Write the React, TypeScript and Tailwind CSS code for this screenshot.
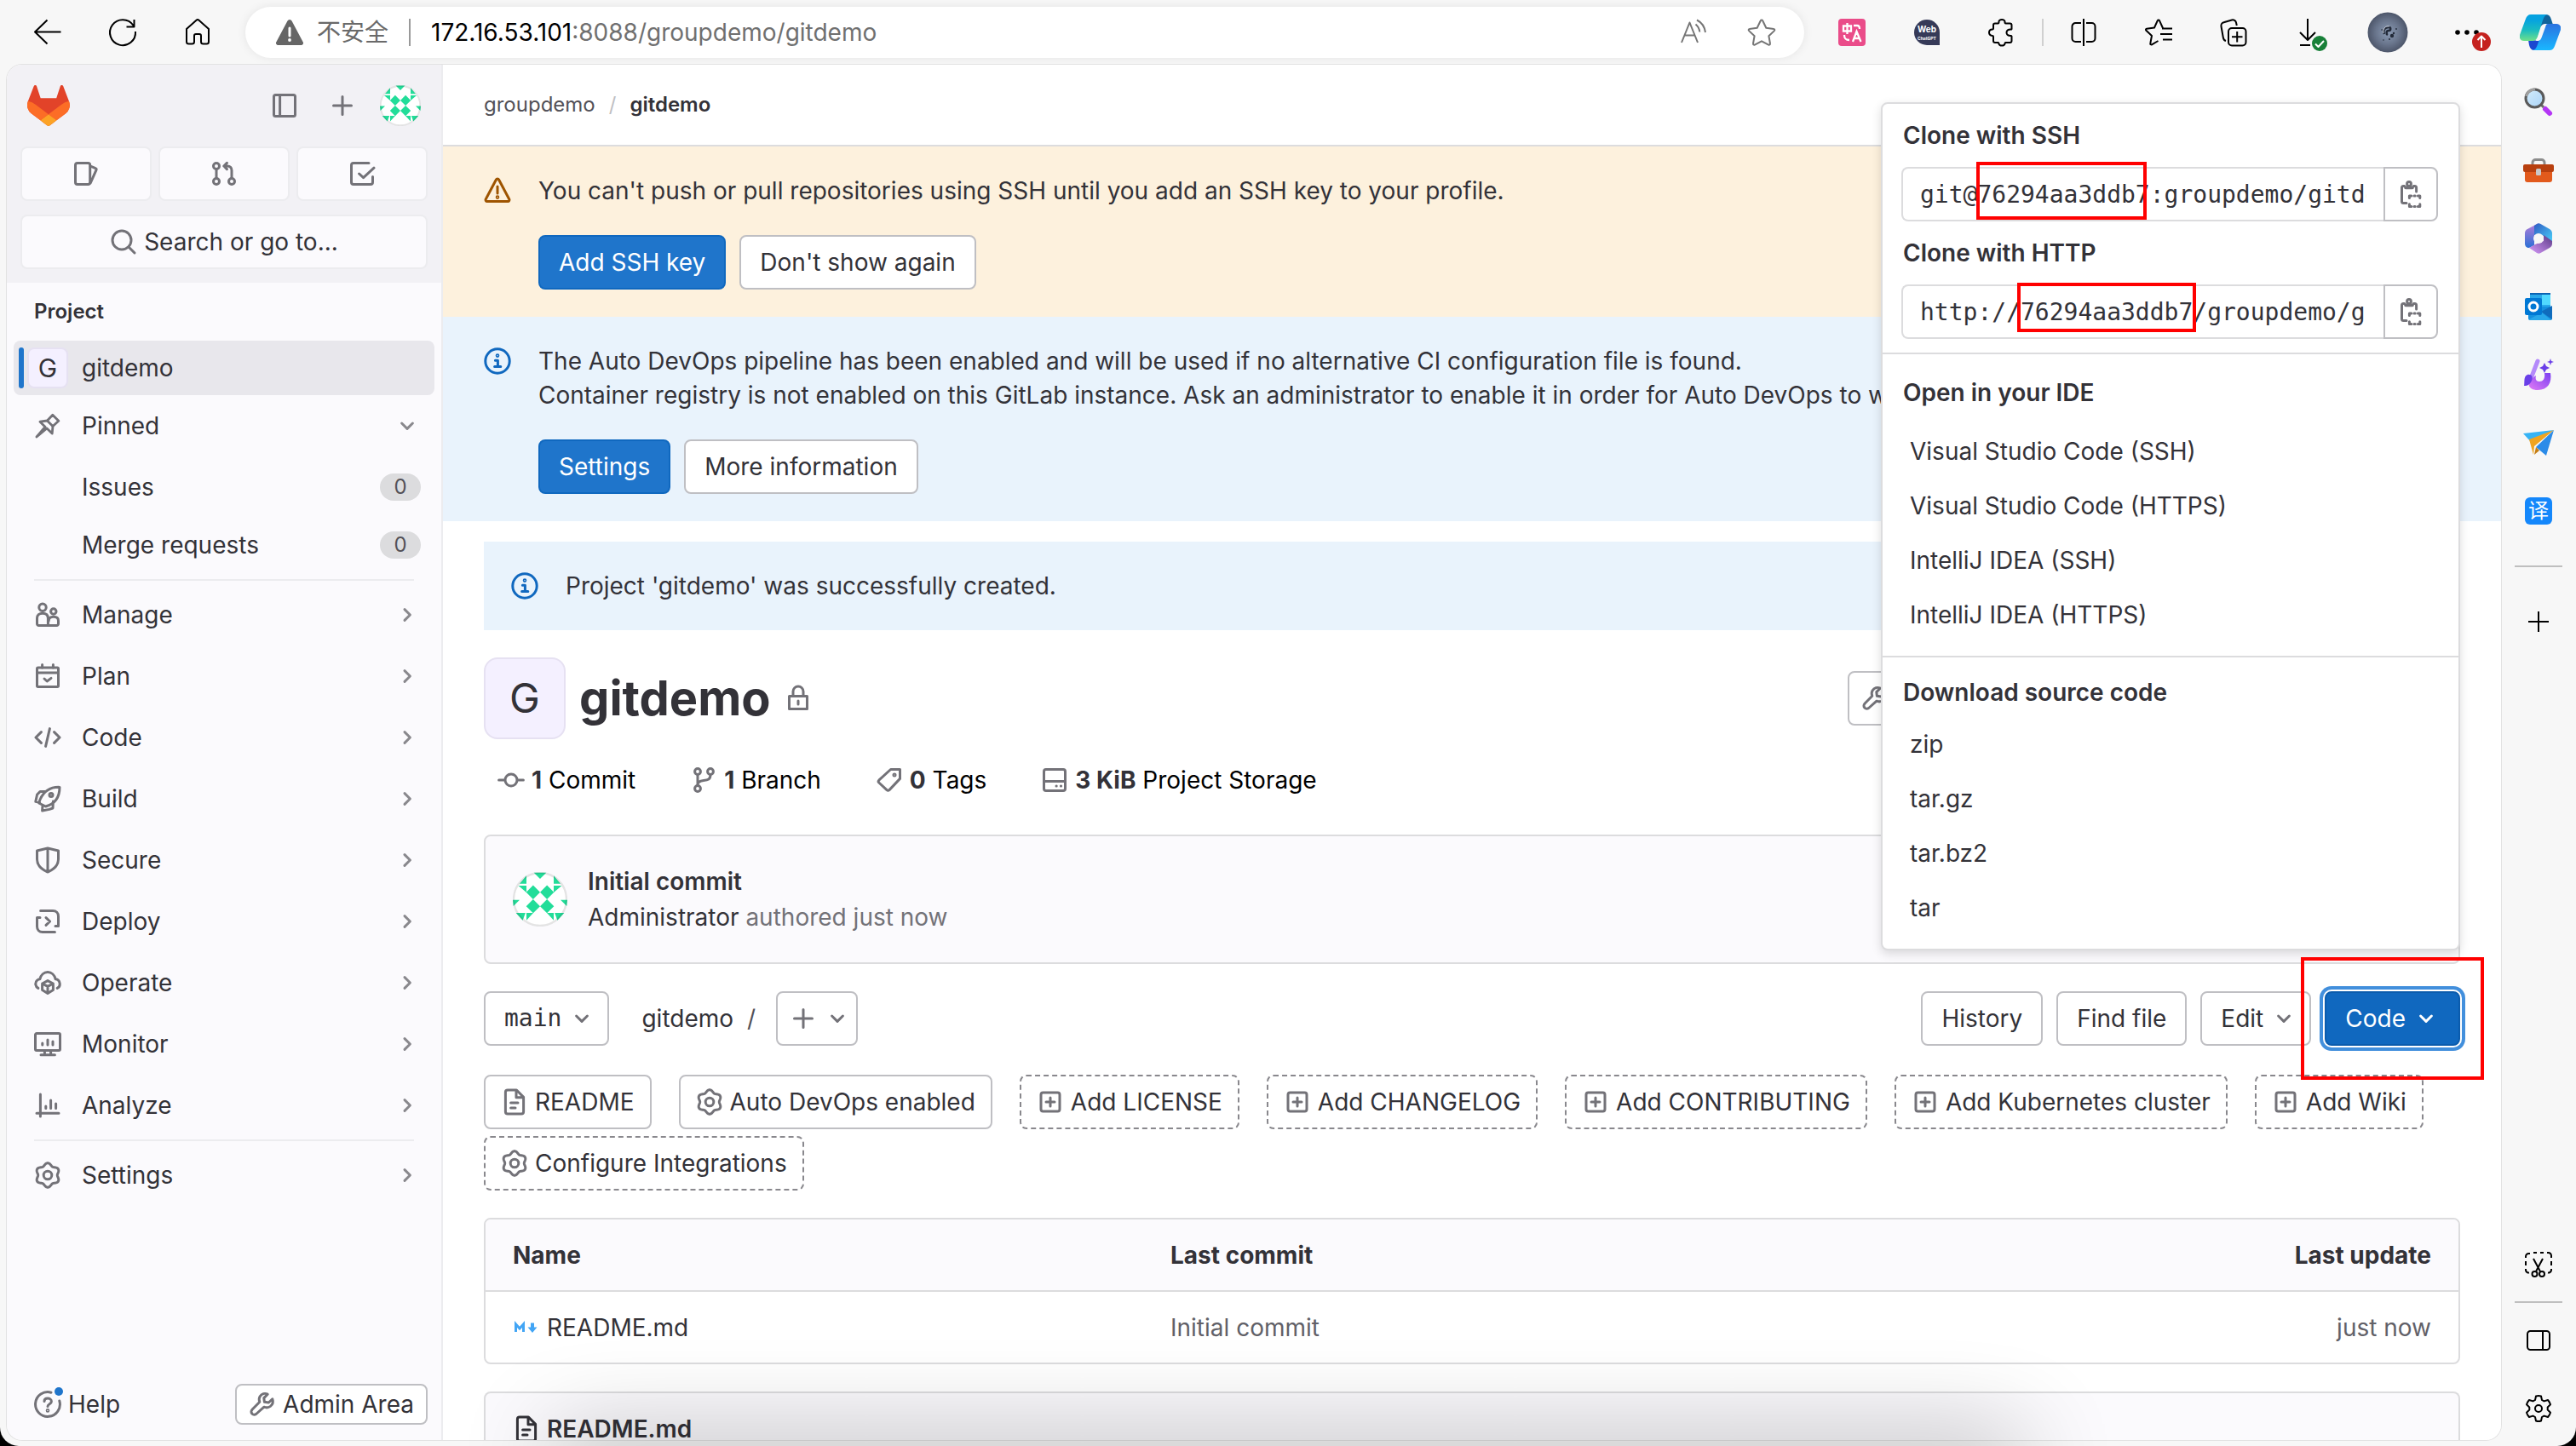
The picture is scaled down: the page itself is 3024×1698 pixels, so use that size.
import type { ReactNode } from "react";

/* ---------- icon helpers ---------- */

type IconProps = { children: ReactNode; className?: string };

function Icon({ children, className = "size-8 shrink-0 text-[#737278]" }: IconProps) {
  return (
    <svg viewBox="0 0 16 16" className={className} fill="none" stroke="currentColor" strokeWidth="1.5" strokeLinecap="round" strokeLinejoin="round" aria-hidden="true">
      {children}
    </svg>
  );
}

function EdgeIcon({ children, className = "size-8 shrink-0 overflow-visible text-black" }: IconProps) {
  return (
    <svg viewBox="0 0 32 32" className={className} fill="none" stroke="currentColor" strokeWidth="2" strokeLinecap="butt" strokeLinejoin="round" aria-hidden="true">
      {children}
    </svg>
  );
}

function lobedPath(lobes: number, base: number, amplitude: number, center: number) {
  const points: string[] = [];
  for (let i = 0; i < 120; i++) {
    const t = (i / 120) * Math.PI * 2;
    const r = base + amplitude * Math.cos(lobes * t);
    points.push(`${(center + r * Math.sin(t)).toFixed(2)} ${(center - r * Math.cos(t)).toFixed(2)}`);
  }
  return `M${points.join("L")}Z`;
}

const gearOutline = lobedPath(6, 6.4, 0.75, 8);

const GearShape = () => (
  <>
    <path d={gearOutline} />
    <circle cx="8" cy="8" r="2.4" />
  </>
);
const WrenchShape = () => (
  <path d="M13.9 4.9 11.7 7 9.2 6.6 8.9 4.3 11.1 2.1C9.4 1.3 7.5 1.9 6.6 3.4c-.6 1-.6 2.2-.2 3.2L2.1 11c-.8.8-.8 1.9-.1 2.6.7.7 1.9.7 2.6-.1L9 9.6c1.200.5 2.600.4 3.700-.4 1.300-1 1.800-2.700 1.200-4.300Z" />
);
const InfoShape = () => (
  <>
    <circle cx="8" cy="8" r="7.1" />
    <path d="M6.700 7.600H8.200V11.200M6.300 11.300H9.900" />
    <circle cx="8" cy="4.800" r=".4" />
  </>
);
const DocShape = () => (
  <>
    <path d="M9.200 1H4C3.200 1 2.700 1.500 2.700 2.200V13.800C2.700 14.500 3.200 15 4 15H12C12.800 15 13.300 14.500 13.300 13.800V5.200ZM9 1.200V5.400H13" />
    <path d="M5.800 8.500H10M5.800 11.500H8.500" />
  </>
);
const PlusSquareShape = () => (
  <>
    <rect x="2.500" y="2.500" width="11" height="11" rx="1.200" />
    <path d="M8 5.500v5M5.500 8h5" />
  </>
);

const ChevronDown = ({ className = "size-8 shrink-0 text-[#737278]" }: { className?: string }) => (
  <Icon className={className}>
    <path d="M4.800 6.500 8 9.700l3.200-3.200" />
  </Icon>
);
const ChevronRight = () => (
  <Icon className="size-8 shrink-0 text-[#89888d]">
    <path d="M6.500 4.800 9.700 8l-3.200 3.200" />
  </Icon>
);

function Identicon({ className }: { className: string }) {
  return (
    <svg viewBox="-22 -22 44 44" className={className} aria-hidden="true">
      <circle r="22" fill="#fff" />
      <g fill="#22dd99">
        <path d="M-5.600-11.300 0-5.600-5.600 0-11.200-5.600ZM5.600-11.300 11.200-5.600 5.600 0 0-5.600ZM-5.600 0 0 5.600-5.600 11.200-11.200 5.600ZM5.600 0 11.200 5.600 5.600 11.200 0 5.600Z" />
        <path d="M-5-21.500H5L0-16.500ZM-11-19V-12.500L-16.500-12.500ZM11-19V-12.500L16.500-12.500ZM-17.500-11H-11V-5.500ZM17.500-11H11V-5.500Z" />
        <path d="M-22 0.500H-16.500L-21.500 5.500ZM22 0.500H16.500L21.500 5.500ZM-19.500 11H-11.800L-14 17ZM19.500 11H11.800L14 17ZM-11 11H-5.500L-11 17ZM11 11H5.500L11 17Z" />
      </g>
      <circle r="21.300" fill="none" stroke="#1f1e24" strokeOpacity=".12" strokeWidth="1.600" />
    </svg>
  );
}

const Tanuki = () => (
  <svg viewBox="0 0 25 24" className="h-12 w-[50px]" aria-hidden="true">
    <path d="m24.507 9.5-.034-.09L21.082.562a.896.896 0 0 0-1.694.091l-2.29 7.01H7.825L5.535.653a.898.898 0 0 0-1.694-.09L.451 9.411.416 9.5a6.297 6.297 0 0 0 2.09 7.278l.012.01.03.022 5.16 3.867 2.56 1.935 1.554 1.176a1.051 1.051 0 0 0 1.268 0l1.555-1.176 2.56-1.935 5.197-3.89.014-.01A6.297 6.297 0 0 0 24.507 9.5Z" fill="#E24329" />
    <path d="m24.507 9.5-.034-.09a11.44 11.44 0 0 0-4.56 2.051l-7.447 5.632 4.742 3.584 5.197-3.89.014-.01A6.297 6.297 0 0 0 24.507 9.5Z" fill="#FC6D26" />
    <path d="m7.707 20.677 2.56 1.935 1.555 1.176a1.051 1.051 0 0 0 1.268 0l1.555-1.176 2.56-1.935-4.743-3.584-4.755 3.584Z" fill="#FCA326" />
    <path d="M5.01 11.461a11.43 11.43 0 0 0-4.56-2.05L.416 9.5a6.297 6.297 0 0 0 2.09 7.278l.012.01.03.022 5.16 3.867 4.745-3.584-7.444-5.632Z" fill="#FC6D26" />
  </svg>
);

/* ---------- browser chrome ---------- */

function ToolButton({ label, children }: { label: string; children: ReactNode }) {
  return (
    <button type="button" aria-label={label} className="flex h-full w-[88px] shrink-0 items-center justify-center">
      {children}
    </button>
  );
}

function BrowserBar() {
  return (
    <header className="flex h-[76px] shrink-0 items-center pl-3">
      <ToolButton label="Back">
        <EdgeIcon><path d="M31.500 15.500H1.500M15.500 1.500 1 15.500l14.500 14" /></EdgeIcon>
      </ToolButton>
      <ToolButton label="Reload">
        <EdgeIcon><path d="M31 15A15 15 0 1 1 28.500 7.800L29 9.200M29.500 1v8.500H20.500" /></EdgeIcon>
      </ToolButton>
      <ToolButton label="Home">
        <EdgeIcon><path d="M3 12 14.500 1.800a2 2 0 0 1 3 0L29 12V27a2.500 2.500 0 0 1-2.500 2.500H22.500a2.500 2.500 0 0 1-2.500-2.500V20a2 2 0 0 0-2-2h-4a2 2 0 0 0-2 2v7a2.500 2.500 0 0 1-2.500 2.500H5.500A2.500 2.500 0 0 1 3 27z" /></EdgeIcon>
      </ToolButton>

      <div className="mx-3 flex h-[60px] flex-1 items-center rounded-full bg-white pr-[34px] pl-9 text-[28px] shadow-[0_0_12px_rgba(0,0,0,0.08)]">
        <svg viewBox="0 0 32 32" className="size-8 shrink-0" aria-hidden="true">
          <path d="M13.500 2.500a2.800 2.800 0 0 1 5 0L31.500 27a2.500 2.500 0 0 1-2.200 4H2.700A2.500 2.500 0 0 1 .5 27Z" fill="#666" />
          <path d="M16 11v9" stroke="#fff" strokeWidth="3" strokeLinecap="round" />
          <circle cx="16" cy="25" r="1.900" fill="#fff" />
        </svg>
        <span className="ml-4 text-[#6a6a6a]">不安全</span>
        <span className="mx-6 h-8 w-0.5 bg-[#999]" />
        <p className="flex-1 text-[#707070]">
          <span className="text-black">172.16.53.101</span>:8088/groupdemo/gitdemo
        </p>
        <button type="button" aria-label="Read aloud">
          <EdgeIcon className="size-8 text-[#757575]"><path d="M2 28 11.500 4.500 21 28M5.500 19.500h12M18.500 6.500c2.500 2 4.300 4.800 4.800 9M20 1.500c5 2.500 9 7.500 10 14.500" /></EdgeIcon>
        </button>
        <button type="button" aria-label="Add to favorites" className="ml-12">
          <EdgeIcon className="size-8 overflow-visible text-[#757575]"><path d="M14.800 2.200a1.300 1.300 0 0 1 2.400 0l4.100 8.500 8.900 1.300a1.200 1.200 0 0 1 .7 2.100l-6.500 6.200 1.600 8.900a1.300 1.300 0 0 1-1.900 1.400L16 26.300l-8.100 4.300a1.300 1.300 0 0 1-1.900-1.400l1.600-8.900-6.500-6.200a1.200 1.200 0 0 1 .7-2.100l8.900-1.300z" /></EdgeIcon>
        </button>
      </div>

      <ToolButton label="Translate extension">
        <svg viewBox="0 0 32 32" className="size-8" fill="none" stroke="#fff" strokeWidth="2" aria-hidden="true">
          <rect width="32" height="32" rx="4" fill="#ea4c89" stroke="none" />
          <path d="M6 8.500h9v6H6zM10.500 5v13M18 8h4c2 0 3 1 3 4M7 19c0 4 1 6 6 6M17 27l4.500-12L26.500 27M19 23h6" strokeWidth="2.300" />
        </svg>
      </ToolButton>
      <ToolButton label="Web ChatGPT">
        <span className="relative flex size-[30px] flex-col items-center justify-center rounded-full rounded-br-md bg-[#363a58] text-[10px] leading-[13px] font-bold text-white">
          <span>Web</span>
          <span className="text-[5px] leading-[8px]">ChatGPT</span>
        </span>
      </ToolButton>
      <ToolButton label="Extensions">
        <EdgeIcon><path d="M8 5.500h3.500a1 1 0 0 0 .9-1.400C12.300 2 14 1 16 1s3.700 1 3.600 3.100a1 1 0 0 0 .9 1.400H25.500a2 2 0 0 1 2 2V12a1 1 0 0 1-1 .6c-2.800 0-5 1.400-5 3.700s2.200 3.700 5 3.700a1 1 0 0 1 1 .6V26a2 2 0 0 1-2 2H20.500a1 1 0 0 0-.9 1.200C19.300 30.500 18 31.500 16 31.500s-3.300-1-3.600-2.300A1 1 0 0 0 11.500 28H8a2 2 0 0 1-2-2v-5a1 1 0 0 0-1-1C2.500 19.700 1 18.500 1 16.300s1.500-3.600 4-3.700a1 1 0 0 0 1-1V7.500a2 2 0 0 1 2-2z" /></EdgeIcon>
      </ToolButton>
      <span className="mx-[3px] h-8 w-0.5 shrink-0 bg-[#d0d0d0]" />
      <ToolButton label="Split screen">
        <EdgeIcon><path d="M13 5H6.500a4 4 0 0 0-4 4v14a4 4 0 0 0 4 4H13M19 5h6.500a4 4 0 0 1 4 4v14a4 4 0 0 1-4 4H19M16 0v32" /></EdgeIcon>
      </ToolButton>
      <ToolButton label="Favorites">
        <EdgeIcon><path d="M21 11 17 2.200a1.200 1.200 0 0 0-2.200 0L11 10.500 2 11.700a1.200 1.200 0 0 0-.6 2.100L8 20l-1.700 9a1.200 1.200 0 0 0 1.800 1.300L15.500 26M20 11.500H32M18 18H32M21 24.500H32" /></EdgeIcon>
      </ToolButton>
      <ToolButton label="Collections">
        <EdgeIcon><rect x="10" y="11" width="20.500" height="20.500" rx="4" /><path d="M20.200 15v12.500M14 21.300h12.500M7 26C5 25.500 4.200 24.500 3.800 22L1.500 9a4 4 0 0 1 3-4.700L14 1.500a4 4 0 0 1 5 3l.8 3.500" /></EdgeIcon>
      </ToolButton>
      <ToolButton label="Downloads">
        <EdgeIcon>
          <path d="M15 0v25M6 16l9 9 9-9M6 31h12" />
          <circle cx="29" cy="29" r="9" fill="#188038" stroke="none" />
          <path d="m24 29.500 3.500 3.500 6.500-7" stroke="#fff" />
        </EdgeIcon>
      </ToolButton>
      <button type="button" aria-label="Profile" className="flex w-[98px] shrink-0 justify-center">
        <svg viewBox="0 0 48 48" className="size-12" aria-hidden="true">
          <defs>
            <radialGradient id="profile">
              <stop offset="0" stopColor="#8b9bb4" />
              <stop offset=".6" stopColor="#69758c" />
              <stop offset="1" stopColor="#4d566a" />
            </radialGradient>
          </defs>
          <circle cx="24" cy="24" r="23.500" fill="url(#profile)" />
          <path d="M20 26c-2-5 1-8 5-8 3 0 3 4 0 4s-3 4-1 5" fill="none" stroke="#222938" strokeWidth="2.500" />
          <path d="M19 25c-1-5 2-9 7-8" fill="none" stroke="#d5dbe6" strokeWidth="1" />
          <g fill="#222938">
            <circle cx="29" cy="28" r="2.200" /><circle cx="31" cy="25" r="1.200" /><circle cx="26" cy="32" r="1" /><circle cx="34" cy="20" r=".9" /><circle cx="19" cy="33" r=".8" /><circle cx="17" cy="21" r=".8" />
          </g>
        </svg>
      </button>
      <ToolButton label="More">
        <EdgeIcon>
          <g fill="currentColor" stroke="none"><circle cx="5" cy="16" r="2.800" /><circle cx="16" cy="16" r="2.800" /><circle cx="27" cy="16" r="2.800" /></g>
          <circle cx="33" cy="27" r="11" fill="#c5221f" stroke="none" />
          <path d="M33 34V20.500M28.500 25l4.500-4.500 4.500 4.500" stroke="#fff" />
        </EdgeIcon>
      </ToolButton>
      <button type="button" aria-label="Copilot" className="flex w-[84px] shrink-0 justify-center">
        <svg viewBox="0 0 48 42" className="h-[42px] w-12" aria-hidden="true">
          <defs>
            <linearGradient id="cpLeft" x1="0" y1="0" x2="0" y2="1"><stop offset=".2" stopColor="#06a2e0" /><stop offset=".6" stopColor="#1bbcc0" /><stop offset="1" stopColor="#6fe08a" /></linearGradient>
            <linearGradient id="cpRight" x1="0" y1="0" x2="0" y2="1"><stop offset="0" stopColor="#2a72e0" /><stop offset="1" stopColor="#19b8ff" /></linearGradient>
          </defs>
          <path d="M27 0h4c3 0 5 2 6 6l2 6h-9c-4 0-6 2-7 5z" fill="#11639b" />
          <path d="M21 42h-4c-3 0-5-2-6-6l-1-6h8c4 0 6-2 7-5z" fill="#1b48d0" />
          <path d="M35 42H14c5 0 6-4 8-10l5-16c1-3 3-5 6-5h10c4 0 6 3 5 7l-7 19c-1 3-3 5-6 5z" fill="url(#cpRight)" />
          <path d="M13 0h21c-5 0-6 4-8 10l-5 16c-1 3-3 5-6 5H5c-4 0-6-3-5-7L7 5c1-3 3-5 6-5z" fill="url(#cpLeft)" />
          <path d="M33 11h-3c-3 0-4 1-5 4l-4 12c-1 3-2 4-5 4h4c4 0 5-2 6-5l4-11c1-3 1-4 3-4z" fill="#f7f7f7" />
        </svg>
      </button>
    </header>
  );
}

function RailButton({ label, children }: { label: string; children: ReactNode }) {
  return (
    <button type="button" aria-label={label} className="flex h-20 w-full shrink-0 items-center justify-center">
      {children}
    </button>
  );
}

function BrowserRail() {
  return (
    <aside className="flex w-[88px] shrink-0 flex-col items-center py-1">
      <RailButton label="Search">
        <svg viewBox="0 0 36 36" className="size-9" aria-hidden="true">
          <defs><linearGradient id="lens" x1="0" y1="0" x2="1" y2="1"><stop offset="0" stopColor="#d4ecfb" /><stop offset="1" stopColor="#a9d3f7" /></linearGradient></defs>
          <path d="m26 26 5 5" stroke="#b436f5" strokeWidth="6" strokeLinecap="round" />
          <path d="m21 21 3 3" stroke="#6b6b6b" strokeWidth="3" />
          <circle cx="13.500" cy="13.500" r="10.500" fill="url(#lens)" stroke="#5a5a5a" strokeWidth="3" />
          <path d="M3.500 11A10.500 10.500 0 0 1 14 3" stroke="#a0a0a0" strokeWidth="3" fill="none" />
        </svg>
      </RailButton>
      <RailButton label="Shopping tools">
        <svg viewBox="0 0 36 32" className="h-8 w-9" aria-hidden="true">
          <path d="M11 10V7a3.500 3.500 0 0 1 3.500-3.500h7A3.500 3.500 0 0 1 25 7v3" stroke="#8c8c8c" strokeWidth="3" fill="none" />
          <path d="M2 15h32v12a3 3 0 0 1-3 3H5a3 3 0 0 1-3-3z" fill="#e25a1c" />
          <path d="M2 9h32a2 2 0 0 1 2 2v5a2 2 0 0 1-2 2H2a2 2 0 0 1-2-2v-5a2 2 0 0 1 2-2z" fill="#b8400f" />
          <rect x="15" y="14" width="6" height="8" rx="1.500" fill="#c9c9c9" />
        </svg>
      </RailButton>
      <RailButton label="Microsoft 365">
        <svg viewBox="0 0 32 36" className="h-9 w-8" aria-hidden="true">
          <defs>
            <linearGradient id="mA" x1="0" y1="0" x2="0" y2="1"><stop offset="0" stopColor="#b77ed8" /><stop offset="1" stopColor="#2b6fd6" /></linearGradient>
            <linearGradient id="mB" x1="0" y1="0" x2="1" y2="1"><stop offset="0" stopColor="#2f5cc4" /><stop offset="1" stopColor="#49cff8" /></linearGradient>
            <linearGradient id="mC" x1="0" y1="1" x2="1" y2="0"><stop offset="0" stopColor="#d79bfb" /><stop offset="1" stopColor="#5b3a86" /></linearGradient>
          </defs>
          <path d="M16 0 3 7C1 8 0 9.500 0 12v12c0 3 2 5 5 5l6-3V12z" fill="url(#mA)" />
          <path d="M11 3 14 1c1.500-1 3-1 4.500 0L29 7c2 1 3 3 3 5v10L20 14l-9 0z" fill="url(#mB)" />
          <path d="M32 21v3c0 2-1 4-3 5l-10.500 6c-1.500 1-3 1-4.500 0L5 29l7-4 10-4v-7z" fill="url(#mC)" />
          <circle cx="16" cy="18" r="6" fill="#f7f7f7" />
        </svg>
      </RailButton>
      <RailButton label="Outlook">
        <svg viewBox="0 0 32 32" className="size-8" aria-hidden="true">
          <rect x="6" width="24" height="20" rx="1" fill="#28a8ea" />
          <path d="M20 2h10v12H20z" fill="#50d9ff" />
          <path d="M6 0h24v2H6z" fill="#0a64b4" />
          <path d="M4 16h28v14a2 2 0 0 1-2 2H6a2 2 0 0 1-2-2z" fill="#1490df" />
          <path d="m32 15-13 7 13 9z" fill="#0f6cbd" />
          <path d="m5 31 15-8 11 9H6z" fill="#28a8ea" />
          <rect y="6" width="20" height="20" rx="2" fill="#0078d4" />
          <circle cx="10" cy="16" r="5" fill="none" stroke="#fff" strokeWidth="3" />
        </svg>
      </RailButton>
      <RailButton label="Designer">
        <svg viewBox="0 0 36 38" className="h-[38px] w-9" aria-hidden="true">
          <defs><linearGradient id="ds" x1="0" y1="1" x2="1" y2="0"><stop offset="0" stopColor="#e07bf5" /><stop offset="1" stopColor="#7b3ff2" /></linearGradient></defs>
          <path d="M9 24C5 28 5 37 17 37c12 0 17-9 15-20l-7 0c1 7-2 10-6 10-4 0-5-3-4-7z" fill="url(#ds)" />
          <path d="M17 3 10 21" stroke="#b48afa" strokeWidth="5" strokeLinecap="round" />
          <path d="M5 19c5-1 7 3 5 7s-4 6-9 6c1-4-1-11 4-13z" fill="#6a3fe8" />
          <path d="m25 5 2 4 4 2-4 2-2 4-2-4-4-2 4-2zM32 0l1 3 3 1-3 1-1 3-1-3-3-1 3-1z" fill="#6a3fe8" />
        </svg>
      </RailButton>
      <RailButton label="Drop">
        <svg viewBox="0 0 36 32" className="h-8 w-9" aria-hidden="true">
          <path d="M0 5 36 1 10 16z" fill="#36b3f5" />
          <path d="M7 12 36 1 13 20l-1 10z" fill="#f0a420" />
          <path d="M36 1 27 31 15 21z" fill="#2b8be8" />
          <path d="m13 30 2-9 4 4z" fill="#c57d12" />
        </svg>
      </RailButton>
      <RailButton label="翻译">
        <span className="flex size-8 items-center justify-center rounded-md bg-[#1487fb] text-[24px] leading-8 text-white">译</span>
      </RailButton>
      <span className="my-6 h-0.5 w-14 shrink-0 bg-[#bfbfbf]" />
      <RailButton label="Add">
        <EdgeIcon><path d="M16 4v24M4 16h24" /></EdgeIcon>
      </RailButton>
      <span className="flex-1" />
      <RailButton label="Screenshot">
        <EdgeIcon>
          <path d="M6 4 H4.500A3.500 3.500 0 0 0 1 7.500V9M10 3h4M18 3h4M26 3h1.500A3.500 3.500 0 0 1 31 6.500V9M1 13v5M31 13v5M1 22v1.500A3.500 3.500 0 0 0 5 26.500M31 22v1.500A3.500 3.500 0 0 1 27 26.500" />
          <path d="m10 10 8 15M21 10l-8 15" />
          <circle cx="11.500" cy="28" r="3" /><circle cx="20" cy="28" r="3" />
        </EdgeIcon>
      </RailButton>
      <span className="my-1 h-0.5 w-14 shrink-0 bg-[#bfbfbf]" />
      <RailButton label="Toggle sidebar">
        <EdgeIcon><rect x="3" y="5" width="26" height="22" rx="3.500" /><path d="M21 5v22" /></EdgeIcon>
      </RailButton>
      <RailButton label="Browser settings">
        <EdgeIcon>
          <path d="M13 1.500c2-.7 4-.7 6 0l1 4.500 2.500 1.400L27 6c1.500 1.700 2.500 3.400 3 5.300L26.700 14.500v3L30 20.700c-.500 1.900-1.500 3.600-3 5.300l-4.500-1.400L20 26l-1 4.500c-2 .7-4 .7-6 0L12 26l-2.500-1.400L5 26c-1.500-1.700-2.500-3.400-3-5.300L5.300 17.500v-3L2 11.300C2.500 9.400 3.500 7.700 5 6l4.500 1.400L12 6z" />
          <circle cx="16" cy="16" r="4" />
        </EdgeIcon>
      </RailButton>
    </aside>
  );
}

/* ---------- project sidebar ---------- */

const navItems: { label: string; icon: ReactNode }[] = [
  {
    label: "Manage",
    icon: (
      <>
        <circle cx="5" cy="3.600" r="2.100" />
        <path d="M1.750 13.200V10C1.750 8 3 7.100 5 7.100S8.200 8 8.200 10v4.250H2.800a1 1 0 0 1-1.050-1.050Z" />
        <circle cx="11.400" cy="6" r="1.600" />
        <path d="M8.600 14.250H13.200a1 1 0 0 0 1.050-1.050V11.500c0-1.500-1-2.400-2.800-2.400S8.600 10 8.600 11.500" />
      </>
    ),
  },
  { label: "Plan", icon: <><rect x="1.750" y="3" width="12.500" height="11.250" rx=".6" /><path d="M1.750 6h12.500M4.800 1.200V3M11.200 1.200V3M6 9.500 7.600 11 10 9.200" /></> },
  { label: "Code", icon: <path d="M4.200 4.800 1 8l3.200 3.200M11.800 4.800 15 8l-3.200 3.200M9.200 2.800 6.800 13.200" /> },
  {
    label: "Build",
    icon: (
      <>
        <path d="M15 1.200C10 1 6 3 3.500 8.500L2.800 10.500 6.800 12.500C12 11 15 7 15 1.200ZM6.500 3.800H3.500L1.800 5.500.9 9.600 3.300 10.200M11.200 9.500 11 13.500 9 14.200 4.800 15 5 12" />
        <circle cx="10" cy="5.800" r="1" />
      </>
    ),
  },
  { label: "Secure", icon: <path d="M8 1 1.750 2.500V7.500C1.750 10.500 4 13.300 8 15c4-1.700 6.250-4.500 6.250-7.500V2.500ZM8 1V15" /> },
  { label: "Deploy", icon: <path d="M3.800 1.750H11c2 0 3.250 1.300 3.250 3.250V10.800H12.500M12.200 14.250H5C3 14.250 1.750 13 1.750 11V5.800H3.500M7 5.800 9.300 8 7 10.200" /> },
  {
    label: "Operate",
    icon: (
      <>
        <path d="M2.400 11.200C.8 10.300.3 8 1.800 6.600c.500-.5 1-.7 1.600-.7C4 3.500 5.800 1.800 8 1.800s4 1.700 4.600 4.100c2.800.300 3.400 4.200 1 5.300" />
        <path d="M8 6.800 11.200 8.500V12.200L8 14.200 4.800 12.200V8.500ZM4.800 8.500 8 10.200 11.200 8.500M8 10.200V14" />
      </>
    ),
  },
  { label: "Monitor", icon: <path d="M1.500 1.750H14.500a.750.750 0 0 1 .750.750V11a.750.750 0 0 1-.750.750H1.500A.750.750 0 0 1 .750 11V2.500a.750.750 0 0 1 .750-.750ZM4 14.400H12.200M6.200 12V14M9.800 12V14M4.900 7.500V8.500M8 5.500V8.500M11 6.500V8.500" /> },
  { label: "Analyze", icon: <path d="M3.700 1.500V14.500M1.500 12.600H14.500M6.900 8.500V9.800M9.800 5V9.800M12.800 7V9.800" /> },
];

function NavRow({ label, icon }: { label: string; icon: ReactNode }) {
  return (
    <button type="button" className="flex h-16 w-full items-center pr-4 pl-6 text-left">
      <Icon>{icon}</Icon>
      <span className="ml-6 flex-1">{label}</span>
      <ChevronRight />
    </button>
  );
}

function PinnedRow({ label }: { label: string }) {
  return (
    <a href="#pinned" className="flex h-16 items-center pr-4 pl-20">
      <span className="flex-1">{label}</span>
      <span className="flex h-8 w-12 items-center justify-center rounded-full bg-[#dcdcde] text-[24px] text-[#535158]">0</span>
    </a>
  );
}

const topButton = "flex h-16 flex-1 items-center justify-center rounded-lg border-2 border-[#ececef] bg-[#fbfafd]";

function ProjectSidebar() {
  return (
    <aside className="flex w-[512px] shrink-0 flex-col border-r-2 border-[#ececef] bg-[#fbfafd]">
      <div className="flex flex-col gap-4 bg-[#f2f1f5] px-4 pb-4">
        <div className="flex h-20 items-center pt-4 pr-2 pl-2">
          <a href="#home" aria-label="GitLab home" className="flex-1"><Tanuki /></a>
          <button type="button" aria-label="Hide sidebar" className="mr-9">
            <Icon><rect x="1.750" y="1.750" width="12.500" height="12.500" rx="1" /><path d="M5.300 2v12" /></Icon>
          </button>
          <button type="button" aria-label="Create new" className="mr-7">
            <Icon><path d="M8 2.750v10.500M2.750 8h10.500" /></Icon>
          </button>
          <button type="button" aria-label="Your profile"><Identicon className="size-12" /></button>
        </div>
        <div className="flex gap-2">
          <button type="button" aria-label="Issues" className={topButton}>
            <Icon><rect x="1.750" y="1.750" width="8.600" height="12.500" rx="1.200" /><path d="m10.600 3.600 3 1.200a.7.7 0 0 1 .4 1l-3.400 7.600" /></Icon>
          </button>
          <button type="button" aria-label="Merge requests" className={topButton}>
            <Icon><circle cx="3.500" cy="3.500" r="1.750" /><circle cx="3.500" cy="12.500" r="1.750" /><circle cx="12.500" cy="12.500" r="1.750" /><path d="M3.500 5.300v5.400M12.500 10.700V6c0-1.500-1-2.500-2.500-2.500H8M9.700 1.700 7.900 3.500l1.800 1.800" /></Icon>
          </button>
          <button type="button" aria-label="To-Do List" className={topButton}>
            <Icon><path d="M12 1.750H3c-.7 0-1.250.55-1.250 1.250v10c0 .7.550 1.250 1.250 1.250h10c.7 0 1.250-.55 1.250-1.250V9.700M6.300 8 8.800 10.300 15 4.600" /></Icon>
          </button>
        </div>
        <button type="button" className="flex h-16 items-center justify-center gap-2 rounded-lg border-2 border-[#ececef] bg-[#fbfafd]">
          <Icon><circle cx="7" cy="7" r="5.500" /><path d="m11 11 3.500 3.500" /></Icon>
          Search or go to...
        </button>
      </div>

      <nav className="flex flex-1 flex-col px-2" aria-label="Project">
        <h2 className="flex h-[68px] items-center pl-6 text-[24px] font-semibold">Project</h2>
        <a href="#gitdemo" className="flex h-16 items-center rounded-lg bg-[#e8e7ec] pl-1.5">
          <span className="h-12 w-1.5 rounded-full bg-[#1f75cb]" />
          <span className="ml-1 flex size-12 items-center justify-center rounded-lg border-2 border-[#e6e1f2] bg-[#f4f0ff] text-[30px]">G</span>
          <span className="ml-4">gitdemo</span>
        </a>
        <button type="button" className="mt-1 flex h-16 items-center pr-4 pl-6 text-left">
          <Icon><path d="m10.900 1.600 3.500 3.500L11 8.300l-.4 4.200L7.500 9.500 1.500 14.500 6.500 8.600 3.500 5.600 7.700 5Z" strokeWidth="1.400" /><path d="M7.700 5 11 8.300" strokeWidth="1.400" /></Icon>
          <span className="ml-6 flex-1">Pinned</span>
          <ChevronDown className="size-8 text-[#89888d]" />
        </button>
        <div className="mt-2 flex flex-col gap-1">
          <PinnedRow label="Issues" />
          <PinnedRow label="Merge requests" />
        </div>
        <hr className="my-2 mr-6 ml-6 border-t-2 border-[#ececef]" />
        <div className="flex flex-col gap-2">
          {navItems.map((item) => <NavRow key={item.label} {...item} />)}
        </div>
        <hr className="my-2 mr-6 ml-6 border-t-2 border-[#ececef]" />
        <NavRow label="Settings" icon={<GearShape />} />
      </nav>

      <div className="flex items-center justify-between pr-4 pb-[18px] pl-8">
        <button type="button" className="relative flex items-center gap-2">
          <Icon><path d="M10 1.100A7.200 7.200 0 1 0 14.900 6" /><path d="M6 6.300C6 5 7 4.500 8 4.500s2.200.6 2.200 1.900C10.200 8 8 7.800 8 9.300" /><circle cx="8" cy="11.700" r=".4" /></Icon>
          Help
          <span className="absolute top-0 left-6 size-2.5 rounded-full bg-[#1f75cb]" />
        </button>
        <a href="#admin" className="flex h-12 items-center gap-2 rounded-lg border-2 border-[#bfbfc3] bg-white px-3.5">
          <Icon><WrenchShape /></Icon>
          Admin Area
        </a>
      </div>
    </aside>
  );
}

/* ---------- project page ---------- */

const defaultButton = "flex h-16 items-center rounded-lg border-2 border-[#bfbfc3] bg-white px-[22px]";
const primaryButton = "flex h-16 items-center rounded-lg border-2 border-[#1068bf] bg-[#1f75cb] px-[22px] text-white";

function CloneField({ id, label, value, marker }: { id: string; label: string; value: string; marker: ReactNode }) {
  return (
    <div>
      <label htmlFor={id} className="block px-0.5 py-4 leading-[42px] font-semibold">{label}</label>
      <div className="relative flex">
        <input id={id} readOnly value={value} className="h-16 min-w-0 flex-1 rounded-l-lg border-2 border-r-0 border-[#dcdcde] bg-white px-5 font-['DejaVu_Sans_Mono',monospace] text-[28px]" />
        <button type="button" aria-label="Copy URL" className="flex h-16 w-16 items-center justify-center rounded-r-lg border-2 border-[#bfbfc3]">
          <Icon>
            <path d="M5.500 13.200H3.750a1 1 0 0 1-1-1V4.300a1 1 0 0 1 1-1H4.300M9.700 3.300h.6a1 1 0 0 1 1 1V6.500" />
            <path d="M5 4.200h4" strokeWidth="1.800" />
            <circle cx="7" cy="2" r="1.200" />
            <path d="M7.200 10.300V9h1.200M12.200 9h1.200v1.300M13.400 13.900v1.300h-1.200M8.400 15.200H7.200v-1.300M10 9h.6M10 15.200h.6" />
          </Icon>
        </button>
        {marker}
      </div>
    </div>
  );
}

function MenuSection({ title, titleClass, items }: { title: string; titleClass: string; items: string[] }) {
  return (
    <section className="border-t-2 border-[#dcdcde] px-6 pb-4">
      <h3 className={titleClass}>{title}</h3>
      <ul>
        {items.map((item) => (
          <li key={item}><a href="#menu" className="flex h-16 items-center px-2">{item}</a></li>
        ))}
      </ul>
    </section>
  );
}

function CodeMenu() {
  return (
    <div className="absolute right-0 bottom-full z-20 mb-12 w-[680px] rounded-lg border-2 border-[#dcdcde] bg-white shadow-[0_4px_12px_rgba(0,0,0,0.14)]">
      <div className="pr-6 pb-4 pl-[22px]">
        <CloneField
          id="clone-ssh"
          label="Clone with SSH"
          value="git@76294aa3ddb7:groupdemo/gitdemo.git"
          marker={<span className="pointer-events-none absolute -top-1.5 left-[88px] h-[68px] w-[200px] border-4 border-[#f00]" />}
        />
        <CloneField
          id="clone-http"
          label="Clone with HTTP"
          value="http://76294aa3ddb7/groupdemo/gitdemo.git"
          marker={<span className="pointer-events-none absolute -top-0.5 left-[136px] h-[58px] w-[210px] border-4 border-[#f00]" />}
        />
      </div>
      <MenuSection
        title="Open in your IDE"
        titleClass="pt-6 pb-4 leading-[42px] font-semibold"
        items={["Visual Studio Code (SSH)", "Visual Studio Code (HTTPS)", "IntelliJ IDEA (SSH)", "IntelliJ IDEA (HTTPS)"]}
      />
      <MenuSection
        title="Download source code"
        titleClass="pt-5 pb-2 leading-[42px] font-semibold"
        items={["zip", "tar.gz", "tar.bz2", "tar"]}
      />
    </div>
  );
}

function Chip({ label, icon, dashed }: { label: string; icon: ReactNode; dashed?: boolean }) {
  return (
    <a
      href="#setup"
      className={
        dashed
          ? "flex h-16 items-center gap-2 rounded-lg border-2 border-dashed border-[#89888d] px-[18px]"
          : "flex h-16 items-center gap-2 rounded-lg border-2 border-[#bfbfc3] px-[18px]"
      }
    >
      <Icon>{icon}</Icon>
      {label}
    </a>
  );
}

function Stat({ icon, value, label }: { icon: ReactNode; value: string; label: string }) {
  return (
    <a href="#stats" className="flex items-center gap-2 text-black">
      <Icon>{icon}</Icon>
      <span><strong className="font-bold text-[#333238]">{value}</strong> {label}</span>
    </a>
  );
}

function ProjectPage() {
  return (
    <main className="flex min-w-0 flex-1 flex-col bg-white">
      <nav aria-label="Breadcrumb" className="flex h-24 shrink-0 items-center gap-4 border-b-2 border-[#dcdcde] px-12 text-[24px]">
        <a href="#groupdemo" className="text-[#535158]">groupdemo</a>
        <span className="text-[#bfbfc3]">/</span>
        <a href="#gitdemo" className="font-semibold">gitdemo</a>
      </nav>

      <div className="flex shrink-0 gap-8 bg-[#fdf1dd] px-12 py-8">
        <div className="flex h-10 items-center text-[#9e5400]">
          <Icon className="size-8"><path d="M7.200 1.500a.9.900 0 0 1 1.600 0L14.900 13a.9.900 0 0 1-.8 1.300H1.900A.9.900 0 0 1 1.100 13ZM8 5.500v4" /><circle cx="8" cy="11.800" r=".4" /></Icon>
        </div>
        <div>
          <p className="leading-10">You can't push or pull repositories using SSH until you add an SSH key to your profile.</p>
          <div className="mt-8 flex gap-4">
            <button type="button" className={primaryButton}>Add SSH key</button>
            <button type="button" className={defaultButton}>Don't show again</button>
          </div>
        </div>
      </div>

      <div className="flex shrink-0 gap-8 bg-[#e9f3fc] px-12 py-8">
        <div className="flex h-10 items-center text-[#1068bf]"><Icon className="size-8"><InfoShape /></Icon></div>
        <div className="whitespace-nowrap">
          <p className="leading-10">The Auto DevOps pipeline has been enabled and will be used if no alternative CI configuration file is found.</p>
          <p className="leading-10">Container registry is not enabled on this GitLab instance. Ask an administrator to enable it in order for Auto DevOps to work.</p>
          <div className="mt-8 flex gap-4">
            <button type="button" className={primaryButton}>Settings</button>
            <button type="button" className={defaultButton}>More information</button>
          </div>
        </div>
      </div>

      <div className="flex flex-col px-12 pt-6">
        <div className="flex gap-8 bg-[#e9f3fc] p-8">
          <div className="flex h-10 items-center text-[#1068bf]"><Icon className="size-8"><InfoShape /></Icon></div>
          <p className="leading-10">Project 'gitdemo' was successfully created.</p>
        </div>

        <div className="mt-8 flex h-24 items-center">
          <span className="flex size-24 items-center justify-center rounded-2xl border-2 border-[#e6e1f2] bg-[#f4f0ff] text-[48px]">G</span>
          <h1 className="ml-4 text-[56px] font-bold">gitdemo</h1>
          <Icon className="ml-4 size-8 text-[#737278]"><path d="M2.750 6.800H13.250V14.250H2.750ZM5 6.600V4a3 3 0 0 1 6 0v2.600M8 9.500v2" /></Icon>
          <button type="button" className="ml-auto flex h-16 w-[719px] items-center rounded-lg border-2 border-[#bfbfc3] px-3.5" aria-label="Project settings">
            <Icon><WrenchShape /></Icon>
          </button>
        </div>

        <div className="mt-7 flex h-10 items-center gap-16 px-4">
          <Stat value="1" label="Commit" icon={<><circle cx="8" cy="8" r="3.500" /><path d="M.8 8h3.500M11.700 8h3.500" /></>} />
          <Stat value="1" label="Branch" icon={<><circle cx="4.500" cy="3" r="1.700" /><circle cx="12" cy="3" r="1.700" /><circle cx="4.500" cy="13" r="1.700" /><path d="M4.500 4.700v6.600M12 4.700c0 3-1.500 3.300-4 3.500-2 .200-3.500.800-3.500 2.500" /></>} />
          <Stat value="0" label="Tags" icon={<><path d="M8.800 1.750H14.250V7.200L8 13.800a1 1 0 0 1-1.500 0L1.900 9.500a1 1 0 0 1 0-1.400Z" /><circle cx="11" cy="5" r=".5" /></>} />
          <Stat value="3 KiB" label="Project Storage" icon={<><rect x="1.750" y="1.750" width="12.500" height="12.500" rx="1.200" /><path d="M1.750 8.800h12.500M9 11.500h.1M11.700 11.500h.1" /></>} />
        </div>

        <section className="mt-11 flex h-[152px] items-center gap-6 rounded-lg border-2 border-[#dcdcde] bg-[#fbfafd] px-8">
          <Identicon className="size-16" />
          <div className="leading-[42px]">
            <p className="font-semibold">Initial commit</p>
            <p><a href="#admin">Administrator</a> <span className="text-[#737278]">authored just now</span></p>
          </div>
        </section>

        <div className="mt-8 flex items-center">
          <button type="button" className="flex h-16 items-center gap-2 rounded-lg border-2 border-[#bfbfc3] pr-3.5 pl-[22px] font-['DejaVu_Sans_Mono',monospace]">
            main
            <ChevronDown />
          </button>
          <a href="#gitdemo" className="ml-[38px]">gitdemo</a>
          <span className="ml-4 text-[#535158]">/</span>
          <button type="button" aria-label="Add to tree" className="ml-6 flex h-16 items-center gap-2 rounded-lg border-2 border-[#bfbfc3] pr-1.5 pl-3.5">
            <Icon className="size-8 text-[#737278]"><path d="M8 2.750v10.500M2.750 8h10.500" /></Icon>
            <ChevronDown />
          </button>
          <div className="ml-auto flex gap-4">
            <button type="button" className={defaultButton}>History</button>
            <button type="button" className={defaultButton}>Find file</button>
            <button type="button" className="flex h-16 items-center gap-2 rounded-lg border-2 border-[#bfbfc3] pr-3.5 pl-[22px]">
              Edit
              <ChevronDown />
            </button>
            <div className="relative">
              <button type="button" aria-expanded="true" className="flex h-16 items-center gap-2 rounded-lg border-2 border-[#0b5cad] bg-[#1068bf] pr-[22px] pl-[22px] text-white shadow-[0_0_0_2px_#fff,0_0_0_6px_#428fdc]">
                Code
                <ChevronDown className="size-8 text-white" />
              </button>
              <CodeMenu />
              <span className="pointer-events-none absolute -inset-x-7 -inset-y-10 z-30 border-4 border-[#f00]" />
            </div>
          </div>
        </div>

        <div className="mt-[34px] flex flex-wrap gap-x-8 gap-y-2">
          <Chip label="README" icon={<DocShape />} />
          <Chip label="Auto DevOps enabled" icon={<GearShape />} />
          <Chip dashed label="Add LICENSE" icon={<PlusSquareShape />} />
          <Chip dashed label="Add CHANGELOG" icon={<PlusSquareShape />} />
          <Chip dashed label="Add CONTRIBUTING" icon={<PlusSquareShape />} />
          <Chip dashed label="Add Kubernetes cluster" icon={<PlusSquareShape />} />
          <Chip dashed label="Add Wiki" icon={<PlusSquareShape />} />
          <Chip dashed label="Configure Integrations" icon={<GearShape />} />
        </div>

        <div className="mt-8 overflow-hidden rounded-lg border-2 border-[#dcdcde]">
          <table className="w-full table-fixed text-left">
            <thead className="bg-[#fbfafd]">
              <tr className="h-[84px] border-b-2 border-[#dcdcde]">
                <th scope="col" className="px-8 font-bold">Name</th>
                <th scope="col" className="px-8 font-bold">Last commit</th>
                <th scope="col" className="px-8 text-right font-bold">Last update</th>
              </tr>
            </thead>
            <tbody>
              <tr className="h-[84px]">
                <td className="px-8">
                  <a href="#readme" className="flex items-center gap-2">
                    <svg viewBox="0 0 32 32" className="size-8" aria-hidden="true">
                      <path d="M3.500 21V12l4.500 5 4.500-5v9" fill="none" stroke="#42a5f5" strokeWidth="3" />
                      <path d="M21 10.500h4v5h3.500L23 22l-5.500-6.500H21z" fill="#42a5f5" />
                    </svg>
                    README.md
                  </a>
                </td>
                <td className="px-8 text-[#626168]">Initial commit</td>
                <td className="px-8 text-right text-[#626168]">just now</td>
              </tr>
            </tbody>
          </table>
        </div>

        <article className="mt-8 rounded-t-lg border-2 border-b-0 border-[#dcdcde] bg-[#fbfafd]">
          <h2 className="flex h-[84px] items-center gap-2 px-8 font-semibold">
            <Icon className="size-8 text-[#333238]"><DocShape /></Icon>
            README.md
          </h2>
        </article>
      </div>
    </main>
  );
}

export default function App() {
  return (
    <div className="h-screen overflow-hidden bg-black font-[Inter,'Noto_Sans_CJK_SC',sans-serif] text-[28px] leading-10 text-[#333238]">
      <div className="relative flex h-full flex-col overflow-hidden rounded-b-[22px] bg-[#f7f7f7]">
        <BrowserBar />
        <div className="flex min-h-0 flex-1">
          <div className="mb-[7px] ml-2 flex min-w-0 flex-1 overflow-hidden rounded-[18px] shadow-[0_0_0_1px_#e2e2e2]">
            <ProjectSidebar />
            <ProjectPage />
          </div>
          <BrowserRail />
        </div>
        <div className="pointer-events-none absolute inset-x-[660px] top-full h-10 shadow-[0_0_110px_10px_rgba(0,0,0,0.3)]" />
      </div>
    </div>
  );
}
